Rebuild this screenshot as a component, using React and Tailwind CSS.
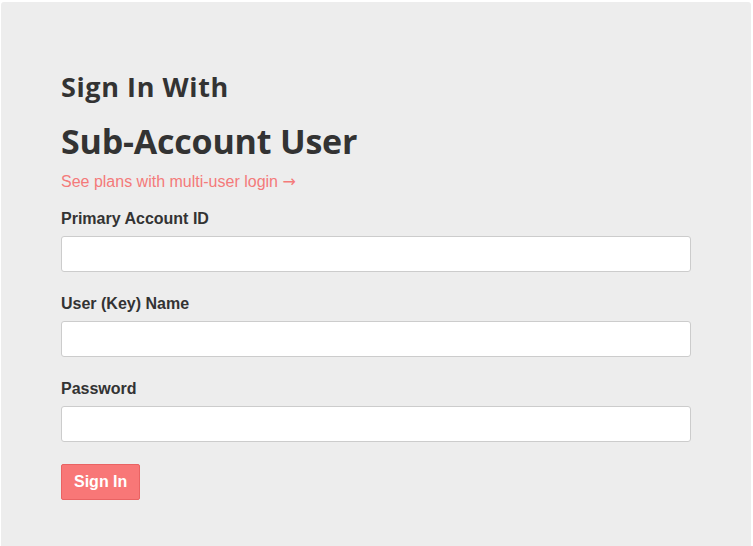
export default function App() {
  const fields = ["Primary Account ID", "User (Key) Name", "Password"];
  return (
    <div className="bg-white min-h-[546px] pt-[2px] pl-[1px] pr-[2px]">
      <div className="bg-[#ededed] rounded-t-[3px] min-h-[544px] px-[60px] pt-[66px] pb-[46px]">
        <h3
          className="text-[27px] leading-[38px] font-bold text-[#333] tracking-[0.6px]"
          style={{ fontFamily: "'Open Sans', sans-serif" }}
        >
          Sign In With
        </h3>
        <h1
          className="text-[34px] leading-[42px] font-bold text-[#333] mt-[14px] tracking-[-0.2px]"
          style={{ fontFamily: "'Open Sans', sans-serif" }}
        >
          Sub-Account User
        </h1>
        <div style={{ fontFamily: "'Liberation Sans', Arial, sans-serif" }}>
          <a href="#" className="block text-[16px] leading-[22px] text-[#f47a7a] mt-[9px]">
            See plans with multi-user login{" "}
            <span style={{ fontFamily: "'DejaVu Sans', sans-serif" }}>→</span>
          </a>
          <form className="mt-[14px]" onSubmit={(e) => e.preventDefault()}>
            {fields.map((f) => (
              <div key={f} className="mb-[20px]">
                <label className="block text-[16px] leading-[24px] font-bold text-[#333] mb-[5px]">{f}</label>
                <input
                  type={f === "Password" ? "password" : "text"}
                  className="block w-full h-[36px] bg-white border border-[#ccc] rounded-[3px] px-2 outline-none"
                />
              </div>
            ))}
            <button
              type="submit"
              className="mt-[2px] h-[36px] px-[12px] bg-[#f87777] border border-[#e96363] rounded-[2px] text-white text-[16px] font-bold"
            >
              Sign In
            </button>
          </form>
        </div>
      </div>
    </div>
  );
}
